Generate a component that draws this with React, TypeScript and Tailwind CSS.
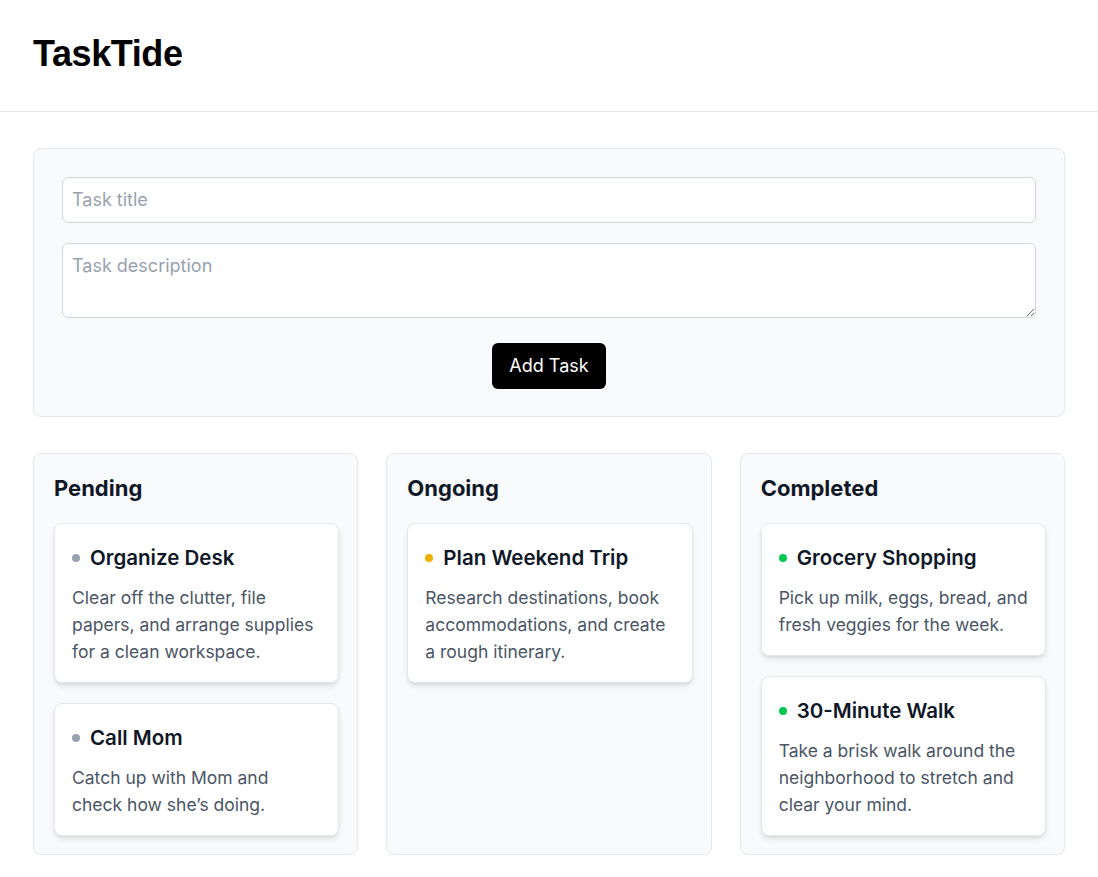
const tasks = {
  pending: [
    {
      title: 'Organize Desk',
      description:
        'Clear off the clutter, file papers, and arrange supplies for a clean workspace.',
    },
    {
      title: 'Call Mom',
      description: 'Catch up with Mom and check how she’s doing.',
    },
  ],
  ongoing: [
    {
      title: 'Plan Weekend Trip',
      description:
        'Research destinations, book accommodations, and create a rough itinerary.',
    },
  ],
  completed: [
    {
      title: 'Grocery Shopping',
      description: 'Pick up milk, eggs, bread, and fresh veggies for the week.',
    },
    {
      title: '30-Minute Walk',
      description:
        'Take a brisk walk around the neighborhood to stretch and clear your mind.',
    },
  ],
}

type Task = { title: string; description: string }

function TaskCard({ task, dot }: { task: Task; dot: string }) {
  return (
    <div className="rounded-lg border border-gray-200 bg-white px-[17px] pb-[17px] pt-5 shadow-md">
      <div className="flex items-center gap-[10px]">
        <span className={`h-2 w-2 shrink-0 rounded-full ${dot}`} />
        <h3 className="text-[20.5px] font-semibold leading-7 text-gray-900">
          {task.title}
        </h3>
      </div>
      <p className="mt-3 text-[17.5px] leading-[27px] text-gray-600">
        {task.description}
      </p>
    </div>
  )
}

function Column({
  title,
  items,
  dot,
}: {
  title: string
  items: Task[]
  dot: string
}) {
  return (
    <section className="rounded-lg border border-gray-200 bg-gray-50 pb-[18px] pl-5 pr-[18px] pt-[19px]">
      <h2 className="mb-5 text-[22px] font-bold leading-[30px] text-gray-900">
        {title}
      </h2>
      <div className="flex flex-col gap-5">
        {items.map((task) => (
          <TaskCard key={task.title} task={task} dot={dot} />
        ))}
      </div>
    </section>
  )
}

export default function App() {
  return (
    <div className="min-h-screen bg-white font-['Inter',sans-serif] text-gray-900 antialiased">
      <header className="border-b border-gray-200 px-[33px] pb-[37px] pt-[34px]">
        <h1 className="font-['Liberation_Sans',Arial,sans-serif] text-4xl font-bold tracking-[-0.4px] text-black">
          TaskTide
        </h1>
      </header>

      <main className="px-[33px] pb-8 pt-9">
        <form className="flex flex-col rounded-lg border border-gray-200 bg-gray-50 px-7 pb-[27px] pt-7">
          <input
            type="text"
            placeholder="Task title"
            className="rounded-md border border-gray-300 bg-white px-[9px] py-2 text-lg leading-7 placeholder:text-gray-400"
          />
          <textarea
            rows={2}
            placeholder="Task description"
            className="mt-5 h-[75px] rounded-md border border-gray-300 bg-white px-[9px] py-2 text-lg leading-7 placeholder:text-gray-400"
          />
          <button
            type="button"
            className="mx-auto mt-[25px] rounded-md bg-black px-[17px] py-[9px] text-lg leading-7 text-white"
          >
            Add Task
          </button>
        </form>

        <div className="mt-9 grid grid-cols-3 items-stretch gap-7">
          <Column title="Pending" items={tasks.pending} dot="bg-gray-400" />
          <Column title="Ongoing" items={tasks.ongoing} dot="bg-yellow-500" />
          <Column
            title="Completed"
            items={tasks.completed}
            dot="bg-green-500"
          />
        </div>
      </main>
    </div>
  )
}
